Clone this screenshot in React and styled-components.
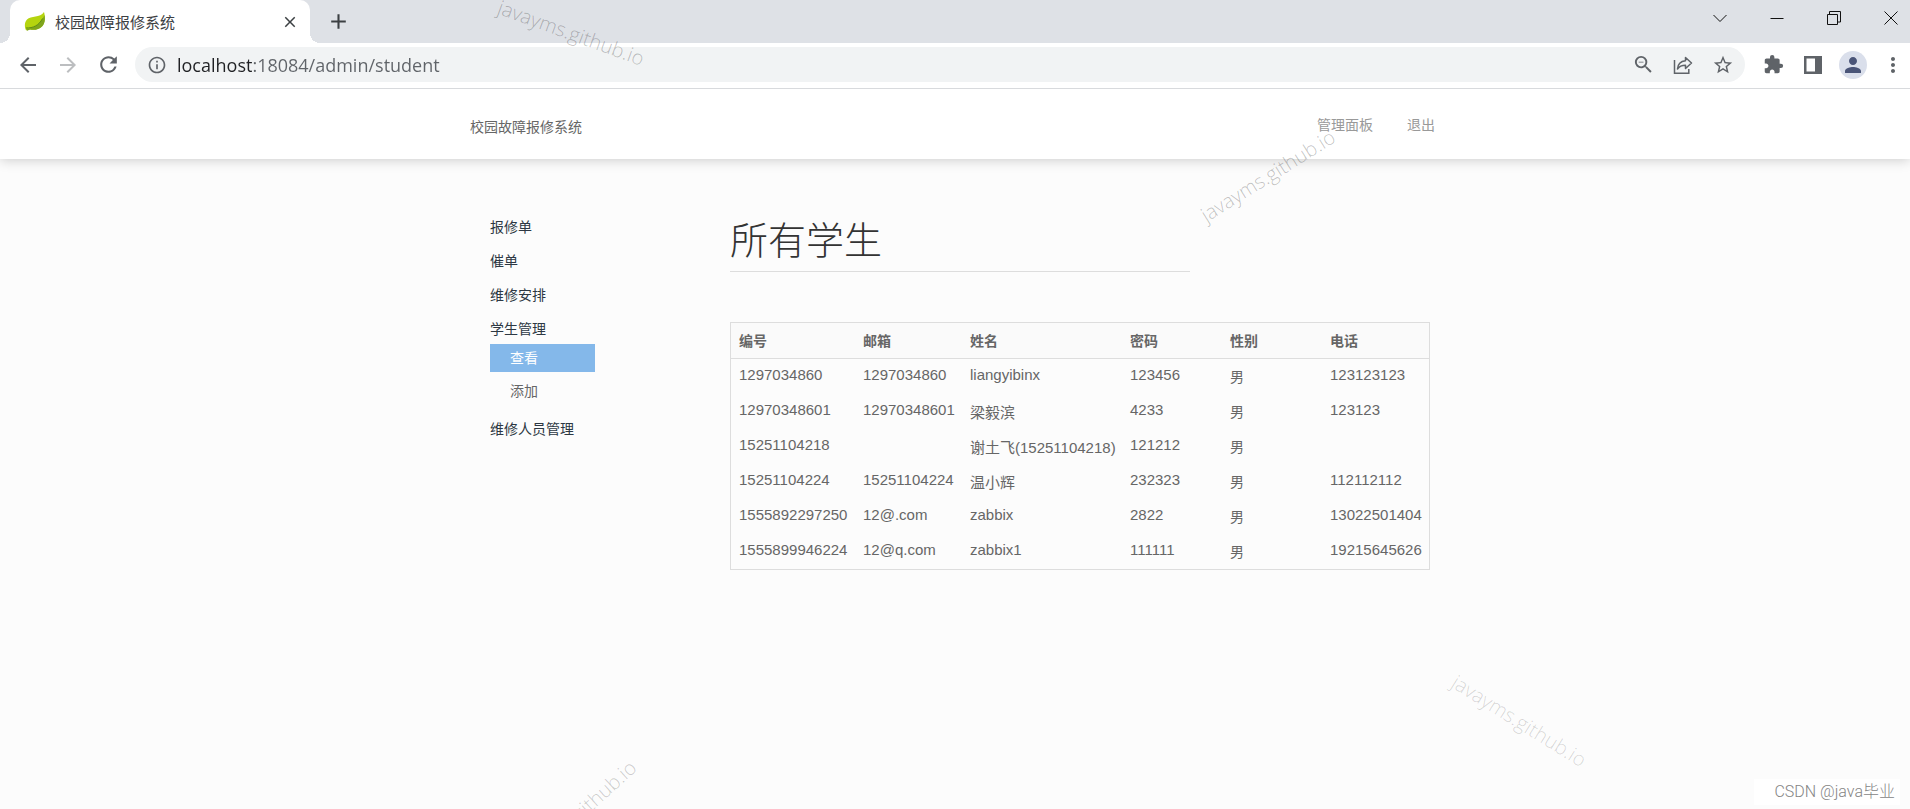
import React, { useState } from 'react';
import styled, { createGlobalStyle, css } from 'styled-components';
import {
  MdAdd,
  MdArrowBack,
  MdArrowForward,
  MdClose,
  MdExtension,
  MdInfoOutline,
  MdMoreVert,
  MdPerson,
  MdRefresh,
  MdStarBorder,
  MdZoomOut,
} from 'react-icons/md';

const GlobalStyle = createGlobalStyle`
  :root {
    --strip: #dee1e6;
    --pill: #f1f3f4;
    --icon: #5f6368;
    --line: #dddddd;
    --text: #666666;
    --cjk: 'Noto Sans CJK SC', sans-serif;
  }
  * {
    box-sizing: border-box;
  }
  body {
    margin: 0;
    background: #fcfcfc;
    color: var(--text);
    font-family: 'Liberation Sans', var(--cjk);
    font-size: 14px;
  }
  button {
    all: unset;
    box-sizing: border-box;
    cursor: pointer;
  }
  a {
    color: inherit;
    text-decoration: none;
  }
  ul {
    list-style: none;
    margin: 0;
    padding: 0;
  }
  svg {
    display: block;
  }
`;

const PageStyles = styled.div`
  position: relative;
  min-height: 100vh;
  overflow: hidden;
`;

const TabStrip = styled.div`
  display: flex;
  align-items: flex-start;
  height: 43px;
  padding-left: 10px;
  background: var(--strip);
`;

const Tab = styled.div`
  position: relative;
  display: flex;
  align-items: center;
  width: 300px;
  height: 43px;
  padding: 0 10px 0 14px;
  background: white;
  border-radius: 10px 10px 0 0;
  color: #3c4043;
  font-family: 'Open Sans', var(--cjk);
  font-size: 15px;
  &::before,
  &::after {
    content: '';
    position: absolute;
    bottom: 0;
    width: 10px;
    height: 10px;
  }
  &::before {
    right: 100%;
    background: radial-gradient(circle at 0 0, var(--strip) 10px, white 10px);
  }
  &::after {
    left: 100%;
    background: radial-gradient(circle at 100% 0, var(--strip) 10px, white 10px);
  }
  span {
    flex: 1;
    margin-left: 9px;
  }
`;

const TabButton = styled.button`
  display: grid;
  place-items: center;
  width: 20px;
  height: 42px;
  margin-left: ${({ $gap }) => $gap || 0}px;
  color: #3c4043;
`;

const WindowControls = styled.div`
  display: flex;
  margin-left: auto;
  margin-right: -9px;
  button {
    display: grid;
    place-items: center;
    width: 57px;
    height: 36px;
  }
`;

const Toolbar = styled.div`
  position: relative;
  z-index: 1;
  display: flex;
  align-items: center;
  height: 46px;
  padding: 0 0 2px 8px;
  background: white;
  border-bottom: 1px solid #d8dadd;
`;

const ToolButton = styled.button`
  display: grid;
  place-items: center;
  width: 40px;
  height: 36px;
  color: ${({ $faded }) => ($faded ? '#bcbec0' : 'var(--icon)')};
`;

const AddressBar = styled.div`
  display: flex;
  flex: 1;
  align-items: center;
  height: 35px;
  margin: 0 8px 0 7px;
  padding: 0 2px 0 12px;
  background: var(--pill);
  border-radius: 18px;
  color: var(--icon);
  input {
    flex: 1;
    min-width: 0;
    height: 30px;
    margin-left: 10px;
    padding: 0;
    border: 0;
    outline: 0;
    font-family: 'Open Sans', sans-serif;
    font-size: 18px;
    /* the host is darker than the rest of the address */
    background: linear-gradient(to right, #202124 76px, #5f6368 76px);
    background-clip: text;
    -webkit-text-fill-color: transparent;
  }
`;

const BrowserActions = styled.div`
  display: flex;
  margin-right: -3px;
`;

const Avatar = styled.span`
  display: grid;
  place-items: center;
  width: 28px;
  height: 28px;
  border-radius: 50%;
  background: #dadfeb;
  color: #4a5578;
`;

const HeaderStyles = styled.header`
  height: 70px;
  background: white;
  box-shadow: 0 1px 12px rgba(0, 0, 0, 0.2);
`;

const HeaderInner = styled.div`
  display: flex;
  align-items: center;
  justify-content: space-between;
  max-width: 970px;
  height: 70px;
  margin: 0 auto;
  padding-top: 4px;
  nav {
    display: flex;
    gap: 34px;
    padding: 0 5px 4px 0;
    color: #999999;
  }
`;

const MainStyles = styled.div`
  display: grid;
  grid-template-columns: 240px minmax(0, 700px);
  max-width: 970px;
  margin: 0 auto;
  padding: 58px 0 40px 20px;
`;

const Menu = styled.ul`
  display: flex;
  flex-direction: column;
  gap: 14px;
  width: 105px;
  line-height: 20px;
  color: #2d3843;
`;

const SubMenu = styled.ul`
  display: flex;
  flex-direction: column;
  gap: 5px;
  padding-top: 5px;
`;

const SubLink = styled.a`
  display: block;
  padding-left: 20px;
  line-height: 28px;
  color: var(--text);
  ${({ $active }) =>
    $active &&
    css`
      background: #84b8ea;
      color: white;
    `}
`;

const Title = styled.h1`
  max-width: 460px;
  margin: 0 0 50px;
  padding-bottom: 12px;
  border-bottom: 1px solid var(--line);
  color: #333333;
  font-family: var(--cjk);
  font-size: 38px;
  font-weight: 300;
  line-height: 42px;
`;

const TableStyles = styled.table`
  width: 100%;
  table-layout: fixed;
  border: 1px solid var(--line);
  border-collapse: separate;
  border-spacing: 0;
  font-size: 15px;
  th,
  td {
    height: 35px;
    padding: 7px 0 0 8px;
    text-align: left;
    vertical-align: top;
    white-space: nowrap;
  }
  td:nth-child(5) {
    font-size: 14px;
  }
  th {
    height: 36px;
    background: #fafafa;
    border-bottom: 1px solid var(--line);
    font-size: 14px;
  }
`;

const Watermark = styled.span`
  position: absolute;
  left: ${({ $x }) => $x}px;
  top: ${({ $y }) => $y}px;
  transform: translate(-50%, -50%) rotate(${({ $angle }) => $angle}deg);
  color: rgba(0, 0, 0, ${({ $alpha }) => $alpha});
  font-family: 'Open Sans', sans-serif;
  font-size: 20px;
  font-weight: 300;
  line-height: 24px;
  pointer-events: none;
  z-index: 2;
`;

const Credit = styled.span`
  position: absolute;
  right: 10px;
  bottom: 4px;
  padding: 0 5px 0 20px;
  background: white;
  color: #858585;
  font-family: Roboto, var(--cjk);
  font-size: 16px;
  font-weight: 300;
  line-height: 26px;
`;

const columns = [
  { key: 'id', label: '编号', width: 124 },
  { key: 'mail', label: '邮箱', width: 107 },
  { key: 'name', label: '姓名', width: 160 },
  { key: 'password', label: '密码', width: 100 },
  { key: 'sex', label: '性别', width: 100 },
  { key: 'phone', label: '电话', width: 107 },
];

const students = [
  { id: '1297034860', mail: '1297034860', name: 'liangyibinx', password: '123456', sex: '男', phone: '123123123' },
  { id: '12970348601', mail: '12970348601', name: '梁毅滨', password: '4233', sex: '男', phone: '123123' },
  { id: '15251104218', mail: '', name: '谢土飞(15251104218)', password: '121212', sex: '男', phone: '' },
  { id: '15251104224', mail: '15251104224', name: '温小辉', password: '232323', sex: '男', phone: '112112112' },
  { id: '1555892297250', mail: '12@.com', name: 'zabbix', password: '2822', sex: '男', phone: '13022501404' },
  { id: '1555899946224', mail: '12@q.com', name: 'zabbix1', password: '111111', sex: '男', phone: '19215645626' },
];

const watermarks = [
  { x: 571, y: 33, angle: 20, alpha: 0.24 },
  { x: 1268, y: 176, angle: -32, alpha: 0.24 },
  { x: 1519, y: 721, angle: 32, alpha: 0.16 },
  { x: 576, y: 816, angle: -42, alpha: 0.2 },
];

function LeafIcon() {
  return (
    <svg width="22" height="21" viewBox="0 0 22 21" aria-hidden="true">
      <path d="M20 1c1.500 5 1.200 11-2 14.500-3 3.200-8 3.800-12 3-1.500.2-2.500 1-4 .8C.5 16 .2 11.500 3 8.500 7 4.500 16 7 20 1z" fill="#b5d40e" />
      <path d="M20.500 4c.8 4.500.4 8.800-2.500 11.500-3 3.200-8 3.800-12 3l-3 1.300-.5-2C10 17.500 16.500 13.500 20.500 4z" fill="#7fa51c" />
      <path d="M2 17c7 .2 13-2.500 16.500-9.500" fill="none" stroke="#5d8a17" strokeWidth="1" />
    </svg>
  );
}

function ShareIcon() {
  return (
    <svg width="20" height="20" viewBox="0 0 20 20" fill="none" stroke="currentColor" strokeWidth="1.500" aria-hidden="true">
      <path d="M1.500 5v13.200h14.300V14" />
      <path d="M12.500 2.500l6 5.500-6 5.500v-3.300c-3.500 0-6 .8-8 3.800.3-4.500 3-7.700 8-8.200z" strokeLinejoin="round" />
    </svg>
  );
}

function SidePanelIcon() {
  return (
    <svg width="18" height="18" viewBox="0 0 18 18" aria-hidden="true">
      <path fillRule="evenodd" d="M0 0h18v18H0zM2.500 2.500v13H11v-13z" fill="currentColor" />
    </svg>
  );
}

function WindowIcon({ d }) {
  return (
    <svg width="14" height="14" viewBox="0 0 14 14" fill="none" stroke="#111" aria-hidden="true">
      <path d={d} />
    </svg>
  );
}

function Browser() {
  const [url, setUrl] = useState('localhost:18084/admin/student');
  return (
    <>
      <TabStrip>
        <Tab>
          <LeafIcon />
          <span>校园故障报修系统</span>
          <TabButton aria-label="关闭标签页">
            <MdClose size={18} />
          </TabButton>
        </Tab>
        <TabButton $gap={16} aria-label="新标签页">
          <MdAdd size={25} />
        </TabButton>
        <WindowControls>
          <button aria-label="搜索标签页">
            <WindowIcon d="M.5 4L7 10.500 13.500 4" />
          </button>
          <button aria-label="最小化">
            <WindowIcon d="M.5 7.500h13" />
          </button>
          <button aria-label="还原">
            <WindowIcon d="M.5 3.500h10v10H.5zM2.500 3.500v-3h11v10.500h-3" />
          </button>
          <button aria-label="关闭">
            <WindowIcon d="M.5.5l13 13M13.500.5l-13 13" />
          </button>
        </WindowControls>
      </TabStrip>
      <Toolbar>
        <ToolButton aria-label="后退">
          <MdArrowBack size={24} />
        </ToolButton>
        <ToolButton $faded aria-label="前进">
          <MdArrowForward size={24} />
        </ToolButton>
        <ToolButton aria-label="重新加载">
          <MdRefresh size={25} />
        </ToolButton>
        <AddressBar>
          <MdInfoOutline size={20} />
          <input aria-label="地址" value={url} onChange={(e) => setUrl(e.target.value)} />
          <ToolButton aria-label="缩放">
            <MdZoomOut size={23} />
          </ToolButton>
          <ToolButton aria-label="分享">
            <ShareIcon />
          </ToolButton>
          <ToolButton aria-label="收藏">
            <MdStarBorder size={22} />
          </ToolButton>
        </AddressBar>
        <BrowserActions>
          <ToolButton aria-label="扩展程序">
            <MdExtension size={21} />
          </ToolButton>
          <ToolButton aria-label="侧边栏">
            <SidePanelIcon />
          </ToolButton>
          <ToolButton aria-label="用户">
            <Avatar>
              <MdPerson size={24} />
            </Avatar>
          </ToolButton>
          <ToolButton aria-label="菜单">
            <MdMoreVert size={24} />
          </ToolButton>
        </BrowserActions>
      </Toolbar>
    </>
  );
}

function Header() {
  return (
    <HeaderStyles>
      <HeaderInner>
        <a href="#home">校园故障报修系统</a>
        <nav>
          <a href="#admin">管理面板</a>
          <a href="#logout">退出</a>
        </nav>
      </HeaderInner>
    </HeaderStyles>
  );
}

function Sidebar() {
  return (
    <nav>
      <Menu>
        <li><a href="#repairs">报修单</a></li>
        <li><a href="#reminders">催单</a></li>
        <li><a href="#schedule">维修安排</a></li>
        <li>
          <a href="#students">学生管理</a>
          <SubMenu>
            <li><SubLink href="#view" $active>查看</SubLink></li>
            <li><SubLink href="#add">添加</SubLink></li>
          </SubMenu>
        </li>
        <li><a href="#workers">维修人员管理</a></li>
      </Menu>
    </nav>
  );
}

function StudentTable() {
  return (
    <TableStyles>
      <colgroup>
        {columns.map((col) => (
          <col key={col.key} width={col.width} />
        ))}
      </colgroup>
      <thead>
        <tr>
          {columns.map((col) => (
            <th key={col.key} scope="col">{col.label}</th>
          ))}
        </tr>
      </thead>
      <tbody>
        {students.map((student) => (
          <tr key={student.id}>
            {columns.map((col) => (
              <td key={col.key}>{student[col.key]}</td>
            ))}
          </tr>
        ))}
      </tbody>
    </TableStyles>
  );
}

export default function App() {
  return (
    <PageStyles>
      <GlobalStyle />
      <Browser />
      <Header />
      <MainStyles>
        <Sidebar />
        <main>
          <Title>所有学生</Title>
          <StudentTable />
        </main>
      </MainStyles>
      <Credit>CSDN @java毕业</Credit>
      {watermarks.map((mark) => (
        <Watermark key={mark.x} $x={mark.x} $y={mark.y} $angle={mark.angle} $alpha={mark.alpha}>
          javayms.github.io
        </Watermark>
      ))}
    </PageStyles>
  );
}
